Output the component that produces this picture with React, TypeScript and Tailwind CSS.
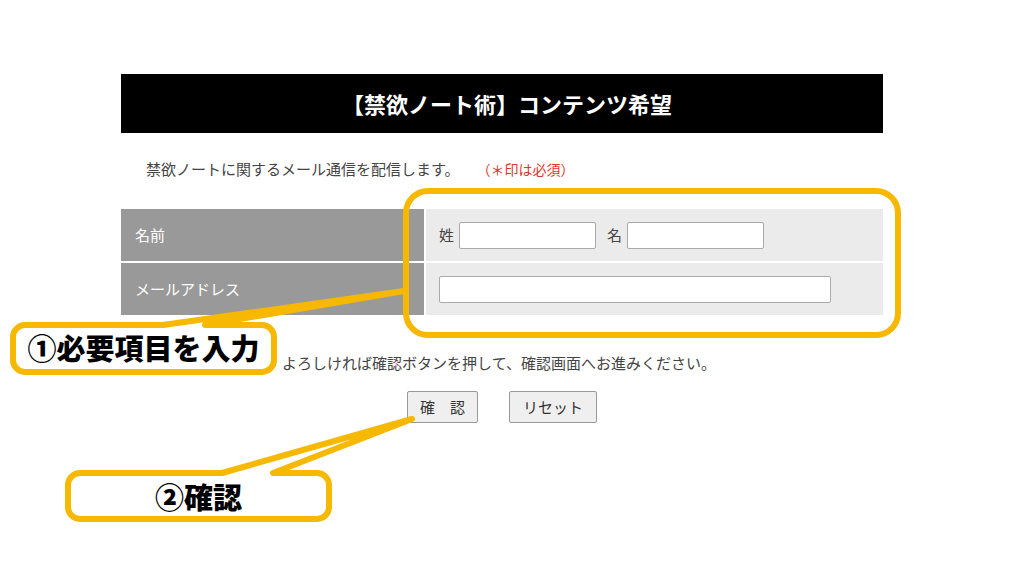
const YELLOW = "#f6b800";

function Callouts() {
  return (
    <>
      <svg
        className="pointer-events-none absolute left-0 top-0"
        width={1024}
        height={576}
        viewBox="0 0 1024 576"
      >
        <rect x={406} y={191} width={492} height={144} rx={22} fill="none" stroke={YELLOW} strokeWidth={6} />
        <path
          d="M25 325 L163 325 L404 291 L205 325 L262 325 A12 12 0 0 1 274 337 L274 360 A12 12 0 0 1 262 372 L25 372 A12 12 0 0 1 13 360 L13 337 A12 12 0 0 1 25 325 Z"
          fill="white"
          stroke={YELLOW}
          strokeWidth={6}
          strokeLinejoin="round"
        />
        <path
          d="M80 473 L222 473 L412 419 L273 473 L317 473 A12 12 0 0 1 329 485 L329 507 A12 12 0 0 1 317 519 L80 519 A12 12 0 0 1 68 507 L68 485 A12 12 0 0 1 80 473 Z"
          fill="white"
          stroke={YELLOW}
          strokeWidth={6}
          strokeLinejoin="round"
        />
      </svg>
      {/* callout labels */}
      <div className="absolute left-[16px] top-[327px] flex h-[41px] w-[255px] items-center justify-center text-[29px] font-black leading-none text-black">
        ①必要項目を入力
      </div>
      <div className="absolute left-[71px] top-[476px] flex h-[40px] w-[255px] items-center justify-center text-[29px] font-black leading-none text-black">
        ②確認
      </div>
    </>
  );
}

export default function App() {
  return (
    <div className="relative h-[576px] w-[1024px] overflow-hidden bg-white font-['Noto_Sans_CJK_JP',sans-serif] text-[#444]">
      <div className="ml-[121px] w-[762px] pt-[74px]">
        <h1 className="flex h-[59px] items-center justify-center bg-black pl-[10px] text-[22px] font-bold text-white">
          【禁欲ノート術】コンテンツ希望
        </h1>

        <p className="mt-[25px] pl-[25px] text-[15px] leading-[22px]">
          禁欲ノートに関するメール通信を配信します。
          <span className="ml-[24px] text-[14px] text-[#e0352b]">（＊印は必須）</span>
        </p>

        {/* form table */}
        <div className="mt-[29px] grid grid-cols-[303px_1fr] gap-[2px] bg-white">
          <div className="flex h-[52px] items-center bg-[#999] pl-[14px] text-[15px] text-white">名前</div>
          <div className="flex h-[52px] items-center bg-[#ebebeb] pl-[13px] text-[15px]">
            <span>姓</span>
            <input className="ml-[5px] h-[27px] w-[137px] rounded-[2px] border border-[#aaa] bg-white" />
            <span className="ml-[11px]">名</span>
            <input className="ml-[5px] h-[27px] w-[137px] rounded-[2px] border border-[#aaa] bg-white" />
          </div>
          <div className="flex h-[52px] items-center bg-[#999] pl-[14px] text-[15px] text-white">メールアドレス</div>
          <div className="flex h-[52px] items-center bg-[#ebebeb] pl-[13px]">
            <input className="h-[27px] w-[392px] rounded-[2px] border border-[#aaa] bg-white" />
          </div>
        </div>

        <p className="mt-[37px] pr-[6px] text-center text-[15px] leading-[22px]">
          よろしければ確認ボタンを押して、確認画面へお進みください。
        </p>

        <div className="mt-[17px] flex justify-center gap-[31px]">
          <button className="h-[32px] w-[71px] rounded-[2px] border border-[#999] bg-[#efefef] text-[15px] text-[#333]">
            確　認
          </button>
          <button className="h-[32px] w-[88px] rounded-[2px] border border-[#999] bg-[#efefef] text-[15px] text-[#333]">
            リセット
          </button>
        </div>
      </div>

      <Callouts />
    </div>
  );
}
